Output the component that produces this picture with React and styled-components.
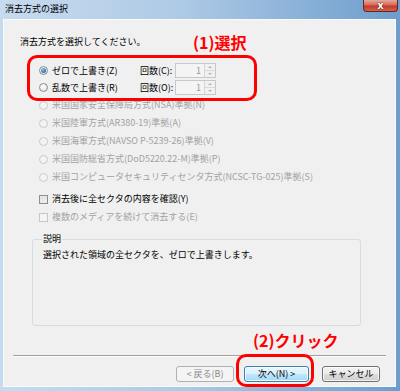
import React from 'react'
import styled, { createGlobalStyle, css } from 'styled-components'

const FONT = `"Noto Sans CJK JP", "Noto Sans", sans-serif`

const GlobalStyle = createGlobalStyle`
  html, body {
    margin: 0;
    padding: 0;
    background: #ffffff;
  }
  body {
    font-family: ${FONT};
  }
`

const Window = styled.div`
  width: 400px;
  height: 391px;
  box-sizing: border-box;
  padding: 0 4px 4px 3px;
  display: flex;
  flex-direction: column;
  background: linear-gradient(to right, #c7dbee 0%, #aecae6 45%, #6d9dcc 100%);
  font-family: ${FONT};
  font-size: 9px;
  color: #000;
  overflow: hidden;
`

const TitleBar = styled.div`
  height: 19px;
  flex: none;
  display: flex;
  align-items: flex-start;
  justify-content: space-between;
`

const Title = styled.div`
  padding: 3px 0 0 2px;
  line-height: 12px;
  font-size: 9px;
`

const CloseButton = styled.div`
  width: 35px;
  height: 12px;
  margin-right: -2px;
  box-sizing: border-box;
  border: 1px solid #5e2a24;
  border-top: none;
  border-radius: 0 0 4px 4px;
  background: linear-gradient(#e6a89d 0%, #d46a5a 45%, #c23a28 55%, #d9604a 100%);
  display: flex;
  align-items: center;
  justify-content: center;
  color: #fff;
  font-family: "DejaVu Sans", sans-serif;
  font-weight: bold;
  font-size: 10px;
  line-height: 10px;
  text-shadow: 0 0 1px #3a0d08, 0 0 1px #3a0d08;
`

const Client = styled.div`
  position: relative;
  flex: 1;
  display: flex;
  flex-direction: column;
  background: #f0f0f0;
  border: 1px solid #f8fbfe;
`

const Prompt = styled.div`
  margin: 16px 0 0 16px;
  line-height: 12px;
`

const OptionList = styled.div`
  margin-top: 14px;
  padding-left: 35px;
  display: flex;
  flex-direction: column;
`

const Row = styled.div`
  height: ${p => p.$h || 18}px;
  display: flex;
  align-items: center;
  color: ${p => (p.$disabled ? '#a2a2a2' : '#000')};
`

const Radio = styled.span`
  width: 9px;
  height: 9px;
  box-sizing: border-box;
  border-radius: 50%;
  flex: none;
  display: flex;
  align-items: center;
  justify-content: center;
  border: 1px solid ${p => (p.$disabled ? '#c9c9c9' : '#8b8b8b')};
  background: ${p => (p.$disabled ? '#f3f3f3' : 'radial-gradient(circle at 40% 35%, #ffffff, #dcdcdc)')};
  ${p => p.$checked && css`
    &::after {
      content: '';
      width: 5px;
      height: 5px;
      border-radius: 50%;
      background: radial-gradient(circle at 40% 35%, #8cc4f5, #1d5fae 80%);
    }
  `}
`

const CheckBox = styled.span`
  width: 9px;
  height: 9px;
  box-sizing: border-box;
  flex: none;
  border: 1px solid ${p => (p.$disabled ? '#c6c6c6' : '#8e8e8e')};
  background: ${p => (p.$disabled ? '#f4f4f4' : 'linear-gradient(135deg, #d9d9d9, #f7f7f7)')};
  box-shadow: inset 0 0 0 1px ${p => (p.$disabled ? '#f4f4f4' : '#e9e9e9')};
`

const Label = styled.span`
  margin-left: 4px;
  line-height: 12px;
  white-space: nowrap;
  width: ${p => (p.$w ? `${p.$w}px` : 'auto')};
`

const CountLabel = styled.span`
  width: 35px;
  line-height: 12px;
  white-space: nowrap;
`

const SpinBox = styled.div`
  width: 41px;
  height: 15px;
  box-sizing: border-box;
  display: flex;
  border: 1px solid #c4c9ce;
  background: #f4f4f4;
`

const SpinValue = styled.div`
  flex: 1;
  text-align: right;
  padding-right: 3px;
  line-height: 13px;
  color: #9a9a9a;
`

const SpinButtons = styled.div`
  width: 10px;
  display: flex;
  flex-direction: column;
  border-left: 1px solid #d6d6d6;
`

const SpinArrow = styled.div`
  flex: 1;
  display: flex;
  align-items: center;
  justify-content: center;
  background: #f1f1f1;
  & + & {
    border-top: 1px solid #dadada;
  }
  &::after {
    content: '';
    border-left: 2px solid transparent;
    border-right: 2px solid transparent;
    ${p => (p.$down
      ? 'border-top: 2px solid #b3b3b3;'
      : 'border-bottom: 2px solid #b3b3b3;')}
  }
`

const CheckList = styled.div`
  margin-top: 4px;
  padding-left: 35px;
  display: flex;
  flex-direction: column;
`

const Group = styled.fieldset`
  margin: 7px 0 0 28px;
  width: 329px;
  height: 93px;
  box-sizing: border-box;
  padding: 4px 9px 0 9px;
  border: 1px solid #d3dde5;
  border-radius: 3px;
  min-inline-size: 0;
`

const Legend = styled.legend`
  padding: 0 1px;
  line-height: 12px;
  font-size: 9px;
`

const Description = styled.div`
  padding-left: 1px;
  line-height: 12px;
`

const Separator = styled.div`
  margin: 29px 9px 0;
  height: 1px;
  background: #a0a0a0;
  border-bottom: 1px solid #ffffff;
`

const ButtonRow = styled.div`
  margin-top: 9px;
  padding-right: 15px;
  display: flex;
  justify-content: flex-end;
`

const Button = styled.div`
  width: ${p => p.$w}px;
  height: 16px;
  margin-left: ${p => p.$gap || 0}px;
  box-sizing: border-box;
  border-radius: 3px;
  display: flex;
  align-items: center;
  justify-content: center;
  line-height: 12px;
  border: 1px solid #707070;
  background: linear-gradient(#f3f3f3 0%, #ebebeb 50%, #dddddd 51%, #cfcfcf 100%);
  box-shadow: inset 0 0 0 1px rgba(255, 255, 255, 0.7);
  ${p => p.$variant === 'disabled' && css`
    border-color: #adb2b5;
    background: #f4f4f4;
    color: #8a8a8a;
    box-shadow: none;
  `}
  ${p => p.$variant === 'default' && css`
    border-color: #3c7fb1;
    background: linear-gradient(#eaf6fd 0%, #d9f0fc 50%, #bee6fd 51%, #a7d9f5 100%);
    box-shadow: inset 0 0 0 1px rgba(255, 255, 255, 0.8);
  `}
`

const Callout = styled.div`
  position: absolute;
  box-sizing: border-box;
  border: 3px solid #ff0000;
  border-radius: 10px;
  pointer-events: none;
`

const CalloutLabel = styled.div`
  position: absolute;
  color: #ff0000;
  font-weight: bold;
  font-size: 16px;
  line-height: 16px;
  white-space: nowrap;
`

const methods = [
  '米国国家安全保障局方式(NSA)準拠(N)',
  '米国陸軍方式(AR380-19)準拠(A)',
  '米国海軍方式(NAVSO P-5239-26)準拠(V)',
  '米国国防総省方式(DoD5220.22-M)準拠(P)',
  '米国コンピュータセキュリティセンタ方式(NCSC-TG-025)準拠(S)'
]

function Spin () {
  return (
    <SpinBox>
      <SpinValue>1</SpinValue>
      <SpinButtons>
        <SpinArrow />
        <SpinArrow $down />
      </SpinButtons>
    </SpinBox>
  )
}

export default function App () {
  return (
    <>
      <GlobalStyle />
      <Window>
        <TitleBar>
          <Title>消去方式の選択</Title>
          <CloseButton>x</CloseButton>
        </TitleBar>
        <Client>
          <Prompt>消去方式を選択してください。</Prompt>

          <OptionList>
            <Row $h={17}>
              <Radio $checked />
              <Label $w={88}>ゼロで上書き(Z)</Label>
              <CountLabel>回数(C):</CountLabel>
              <Spin />
            </Row>
            <Row $h={17}>
              <Radio />
              <Label $w={88}>乱数で上書き(R)</Label>
              <CountLabel>回数(O):</CountLabel>
              <Spin />
            </Row>
            {methods.map(m => (
              <Row key={m} $disabled>
                <Radio $disabled />
                <Label>{m}</Label>
              </Row>
            ))}
          </OptionList>

          <CheckList>
            <Row>
              <CheckBox />
              <Label>消去後に全セクタの内容を確認(Y)</Label>
            </Row>
            <Row $disabled>
              <CheckBox $disabled />
              <Label>複数のメディアを続けて消去する(E)</Label>
            </Row>
          </CheckList>

          <Group>
            <Legend>説明</Legend>
            <Description>選択された領域の全セクタを、ゼロで上書きします。</Description>
          </Group>

          <Separator />

          <ButtonRow>
            <Button $w={58} $variant="disabled">&lt; 戻る(B)</Button>
            <Button $w={65} $gap={10} $variant="default">次へ(N) &gt;</Button>
            <Button $w={58} $gap={13}>キャンセル</Button>
          </ButtonRow>

          <CalloutLabel style={{ left: 189, top: 14 }}>(1)選択</CalloutLabel>
          <Callout style={{ left: 23, top: 35, width: 230, height: 46 }} />
          <CalloutLabel style={{ left: 249, top: 312 }}>(2)クリック</CalloutLabel>
          <Callout style={{ left: 232, top: 334, width: 78, height: 33 }} />
        </Client>
      </Window>
    </>
  )
}
